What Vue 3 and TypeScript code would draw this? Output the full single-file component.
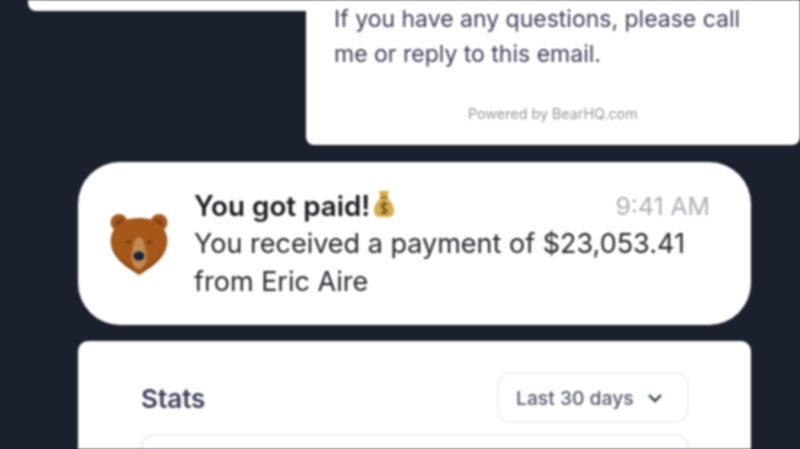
<template>
  <main class="page">
    <section class="top-row">
      <div class="stub-card"></div>
      <div class="mail-card">
        <p class="mail-text">If you have any questions, please call me or reply to this email.</p>
        <p class="powered">Powered by BearHQ.com</p>
      </div>
    </section>

    <section class="notification">
      <svg class="bear" viewBox="0 0 58 62" aria-hidden="true">
        <circle cx="9" cy="9.500" r="8.500" fill="#a5581c" />
        <circle cx="49" cy="9.500" r="8.500" fill="#a5581c" />
        <circle cx="10.500" cy="11" r="4.500" fill="#6a3b16" />
        <circle cx="47.500" cy="11" r="4.500" fill="#6a3b16" />
        <path d="M29 5C43 5 54 10 57 24C59 38 50 47 41 54L29 62L17 54C8 47 -1 38 1 24C4 10 15 5 29 5Z" fill="#a5581a" />
        <path d="M3 34C7 44 14 49 21 52L29 62L17 54C9 48 4 42 3 34ZM55 34C51 44 44 49 37 52L29 62L41 54C49 48 54 42 55 34Z" fill="#8f4c15" />
        <path d="M29 24C33 24 34 29 35.500 37C38 45 36 54 29 56C22 54 20 45 22.500 37C24 29 25 24 29 24Z" fill="#c08a52" />
        <ellipse cx="29" cy="43" rx="5.500" ry="4.500" fill="#1a2138" />
        <path d="M16 29C17.500 27.600 19.500 27.600 21 29C19.500 30.400 17.500 30.400 16 29ZM37 29C38.500 27.600 40.500 27.600 42 29C40.500 30.400 38.500 30.400 37 29Z" fill="#3d2410" />
      </svg>
      <div class="notification-body">
        <div class="notification-head">
          <h2 class="title">
            You got paid!
            <svg class="bag" viewBox="0 0 20 26" aria-hidden="true">
              <path d="M5 0H15L13 7C17 10 20 15 20 20C20 24 17 26 14 26H6C3 26 0 24 0 20C0 15 3 10 7 7Z" fill="#d8ab4e" />
              <rect x="6" y="5.500" width="8" height="2" fill="#96702a" />
              <path d="M13.500 13.500C12 12 7.500 12 7.500 15C7.500 18 13 17 13 20C13 22.500 8.500 22.500 7 21M10 10.500V23.500" fill="none" stroke="#7a5a22" stroke-width="1.800" />
            </svg>
          </h2>
          <span class="time">9:41 AM</span>
        </div>
        <p class="message">You received a payment of $23,053.41 from Eric Aire</p>
      </div>
    </section>

    <section class="stats-card">
      <div class="stats-head">
        <h3 class="stats-title">Stats</h3>
        <button class="range" type="button">
          Last 30 days
          <svg class="chevron" viewBox="0 0 16 10" aria-hidden="true">
            <path d="M2 2L8 8L14 2" fill="none" stroke="#34374a" stroke-width="2.400" />
          </svg>
        </button>
      </div>
      <div class="stats-box"></div>
    </section>
  </main>
</template>

<script setup lang="ts">
</script>

<style>
html,
body {
  margin: 0;
  background: #1a202e;
}
</style>

<style scoped>
* {
  margin: 0;
  padding: 0;
  box-sizing: border-box;
}

.page {
  width: 800px;
  height: 449px;
  overflow: hidden;
  background: #1a202e;
  font-family: Inter, "Liberation Sans", sans-serif;
  filter: blur(0.9px);
}

.top-row {
  display: flex;
  align-items: flex-start;
  padding-left: 28px;
}

.stub-card {
  width: 278px;
  height: 11px;
  background: #fff;
  border-radius: 0 0 0 8px;
}

.mail-card {
  flex: 1;
  height: 145px;
  padding: 2px 28px 0;
  background: #fff;
  border-radius: 0 0 8px 8px;
}

.mail-text {
  width: 420px;
  font-size: 23px;
  line-height: 34.500px;
  color: #3f3f5a;
}

.powered {
  margin-top: 33px;
  margin-left: 134px;
  font-size: 14.300px;
  line-height: 20px;
  color: #94979f;
}

.notification {
  display: flex;
  align-items: center;
  gap: 26px;
  height: 163px;
  margin: 17px 49px 0 78px;
  padding: 0 41px 0 32px;
  background: #fff;
  border-radius: 42px;
}

.bear {
  flex: none;
  width: 58px;
  height: 62px;
}

.notification-body {
  flex: 1;
  color: #26262d;
}

.notification-head {
  display: flex;
  align-items: center;
  justify-content: space-between;
  height: 38px;
}

.title {
  display: flex;
  align-items: center;
  gap: 4px;
  font-size: 27.800px;
  font-weight: 600;
  color: #1a1a20;
}

.bag {
  width: 20px;
  height: 26px;
  margin-top: -4px;
}

.time {
  font-size: 24.800px;
  color: #adaeb2;
}

.message {
  width: 510px;
  font-size: 27px;
  line-height: 38px;
}

.stats-card {
  height: 160px;
  margin: 16px 49px 0 78px;
  padding: 31px 62px 0;
  background: #fff;
  border-radius: 10px;
}

.stats-head {
  display: flex;
  align-items: center;
  justify-content: space-between;
  padding-left: 1px;
}

.stats-title {
  margin-top: 2px;
  font-size: 26px;
  font-weight: 600;
  color: #3f3f5a;
}

.range {
  display: flex;
  align-items: center;
  gap: 13px;
  width: 192px;
  height: 51px;
  padding-left: 17px;
  background: #fff;
  border: 2px solid #eef0f3;
  border-radius: 14px;
  font-family: inherit;
  font-size: 19.300px;
  font-weight: 500;
  color: #55586c;
}

.chevron {
  width: 16px;
  height: 10px;
}

.stats-box {
  height: 80px;
  margin-top: 11px;
  border: 2px solid #eef0f3;
  border-radius: 14px;
}
</style>
